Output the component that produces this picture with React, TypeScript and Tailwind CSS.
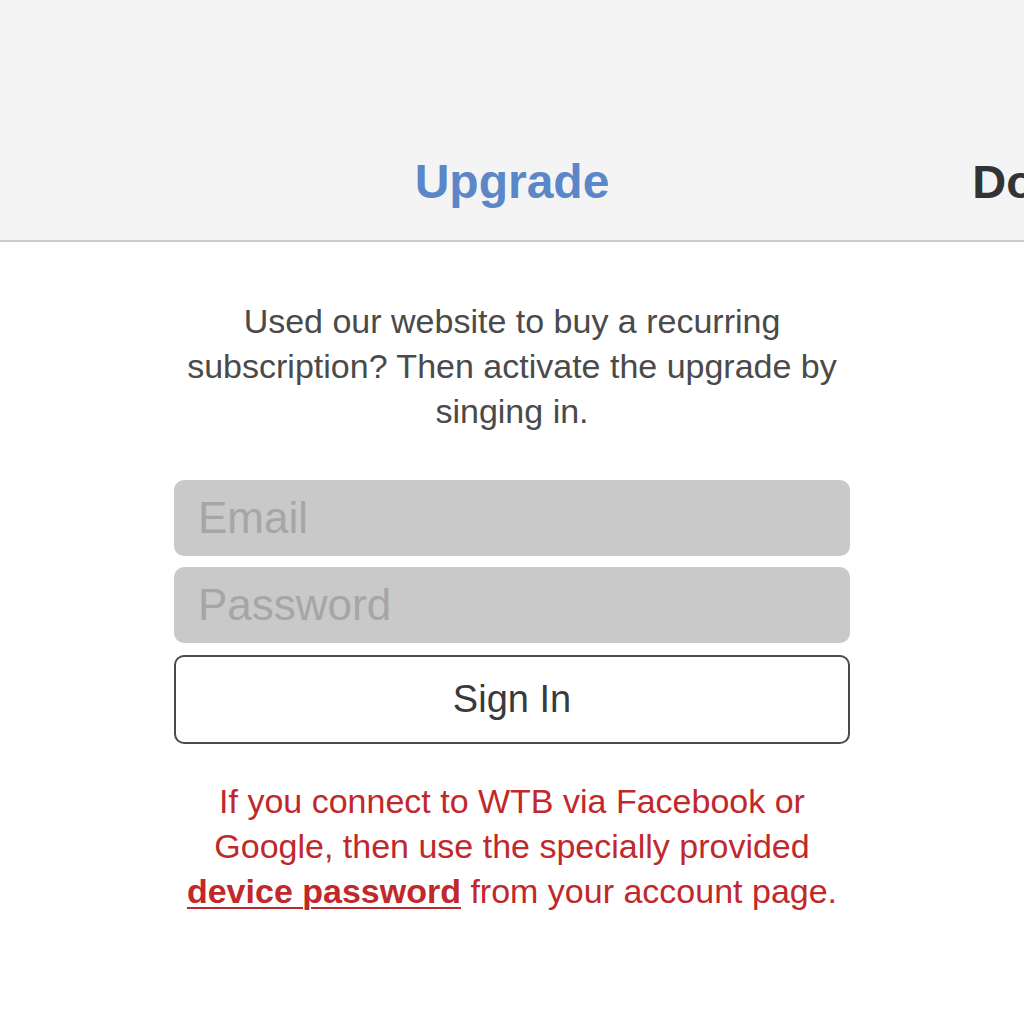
import React from "react";

export default function App() {
  return (
    <div
      className="w-[1024px] h-[1024px] overflow-hidden bg-white"
      style={{ fontFamily: '"Liberation Sans", Arial, sans-serif' }}
    >
      <header className="h-[242px] bg-[#f4f4f4] border-b-2 border-[#cbcbcb] overflow-hidden">
        <div className="grid grid-cols-[1fr_auto_1fr] pt-[158px] whitespace-nowrap">
          <div />
          <div className="text-[48px] leading-none font-bold text-[#5b87c9]">Upgrade</div>
          <div className="overflow-hidden pl-[363px] text-[47px] leading-none font-bold text-[#333333]">
            Done
          </div>
        </div>
      </header>

      <main className="flex flex-col items-center">
        <p className="mt-[57px] w-[720px] text-center text-[34px] leading-[45px] text-[#4a4a4a]">
          Used our website to buy a recurring
          <br />
          subscription? Then activate the upgrade by
          <br />
          singing in.
        </p>

        <form className="mt-[46px] w-[676px] flex flex-col">
          <input
            type="email"
            placeholder="Email"
            className="h-[76px] w-full rounded-[10px] bg-[#c9c9c9] px-[24px] text-[44px] text-[#444] placeholder:text-[#a6a6a6] outline-none"
          />
          <input
            type="password"
            placeholder="Password"
            className="mt-[11px] h-[76px] w-full rounded-[10px] bg-[#c9c9c9] px-[24px] text-[44px] text-[#444] placeholder:text-[#a6a6a6] outline-none"
          />
          <button
            type="button"
            className="mt-[12px] h-[89px] w-full rounded-[10px] border-2 border-[#4a4a4a] bg-white text-[38px] text-[#3a3a3a]"
          >
            Sign In
          </button>
        </form>

        <p className="mt-[35px] w-[720px] text-center text-[34px] leading-[45px] text-[#c1282b]">
          If you connect to WTB via Facebook or
          <br />
          Google, then use the specially provided
          <br />
          <a href="#" className="font-bold underline underline-offset-[4px] decoration-2">
            device password
          </a>{" "}
          from your account page.
        </p>
      </main>
    </div>
  );
}
